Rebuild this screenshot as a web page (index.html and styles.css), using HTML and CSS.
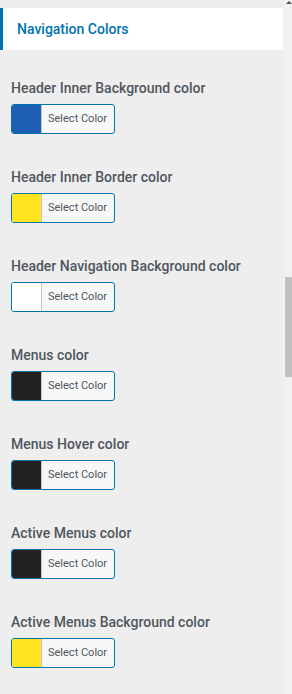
FILE: index.html
```html
<!DOCTYPE html>
<html>
<head>
<meta charset="utf-8">
<link rel="stylesheet" href="styles.css">
</head>
<body>
<div class="page">
  <main class="panel">
    <div class="section-title">Navigation Colors</div>
    <div class="controls">
      <div class="control">
        <div class="label">Header Inner Background color</div>
        <button class="picker"><span class="swatch blue"></span><span class="picker-text">Select Color</span></button>
      </div>
      <div class="control">
        <div class="label">Header Inner Border color</div>
        <button class="picker"><span class="swatch yellow"></span><span class="picker-text">Select Color</span></button>
      </div>
      <div class="control">
        <div class="label">Header Navigation Background color</div>
        <button class="picker"><span class="swatch white"></span><span class="picker-text">Select Color</span></button>
      </div>
      <div class="control">
        <div class="label">Menus color</div>
        <button class="picker"><span class="swatch dark"></span><span class="picker-text">Select Color</span></button>
      </div>
      <div class="control">
        <div class="label">Menus Hover color</div>
        <button class="picker"><span class="swatch dark"></span><span class="picker-text">Select Color</span></button>
      </div>
      <div class="control">
        <div class="label">Active Menus color</div>
        <button class="picker"><span class="swatch dark"></span><span class="picker-text">Select Color</span></button>
      </div>
      <div class="control">
        <div class="label">Active Menus Background color</div>
        <button class="picker"><span class="swatch yellow"></span><span class="picker-text">Select Color</span></button>
      </div>
    </div>
  </main>
  <div class="scrollbar">
    <div class="scroll-arrow"></div>
    <div class="scroll-thumb"></div>
  </div>
</div>
</body>
</html>
```
FILE: styles.css
```css
* { box-sizing: border-box; }
html, body { margin: 0; padding: 0; }
body {
  background: #eeeeee;
  font-family: Roboto, "Liberation Sans", sans-serif;
  width: 292px;
  height: 694px;
  overflow: hidden;
}
.page {
  display: flex;
  height: 694px;
}
.panel {
  width: 283px;
  background: #eeeeee;
  padding-top: 8px;
}
.section-title {
  height: 42px;
  background: #ffffff;
  border-left: 3px solid #0073aa;
  color: #0073aa;
  font-size: 14px;
  font-weight: 500;
  line-height: 42px;
  padding-left: 14px;
}
.controls {
  padding: 28px 0 0 11px;
}
.control {
  margin-bottom: 33px;
}
.label {
  font-size: 14px;
  font-weight: 500;
  line-height: 20px;
  color: #50575e;
}
.picker {
  margin-top: 6px;
  display: flex;
  width: 104px;
  height: 30px;
  padding: 0;
  border: 1px solid #0073aa;
  border-radius: 3px;
  background: #f7f7f7;
  overflow: hidden;
  font-family: inherit;
  cursor: pointer;
}
.swatch {
  width: 30px;
  height: 100%;
  border-right: 1px solid #c3c4c7;
}
.swatch.blue { background: #1e5fb4; }
.swatch.yellow { background: #ffe41f; }
.swatch.white { background: #ffffff; }
.swatch.dark { background: #222222; }
.picker-text {
  flex: 1;
  font-size: 11px;
  color: #50575e;
  line-height: 28px;
  text-align: left;
  padding-left: 6px;
}
.scrollbar {
  width: 9px;
  background: #f1f1f1;
  position: relative;
}
.scroll-arrow {
  position: absolute;
  top: 1px;
  right: 0;
  width: 0;
  height: 0;
  border-left: 3px solid transparent;
  border-right: 3px solid transparent;
  border-bottom: 3px solid #505050;
}
.scroll-thumb {
  margin: 277px 0 0 2px;
  width: 7px;
  height: 100px;
  background: #c1c1c1;
}
```
